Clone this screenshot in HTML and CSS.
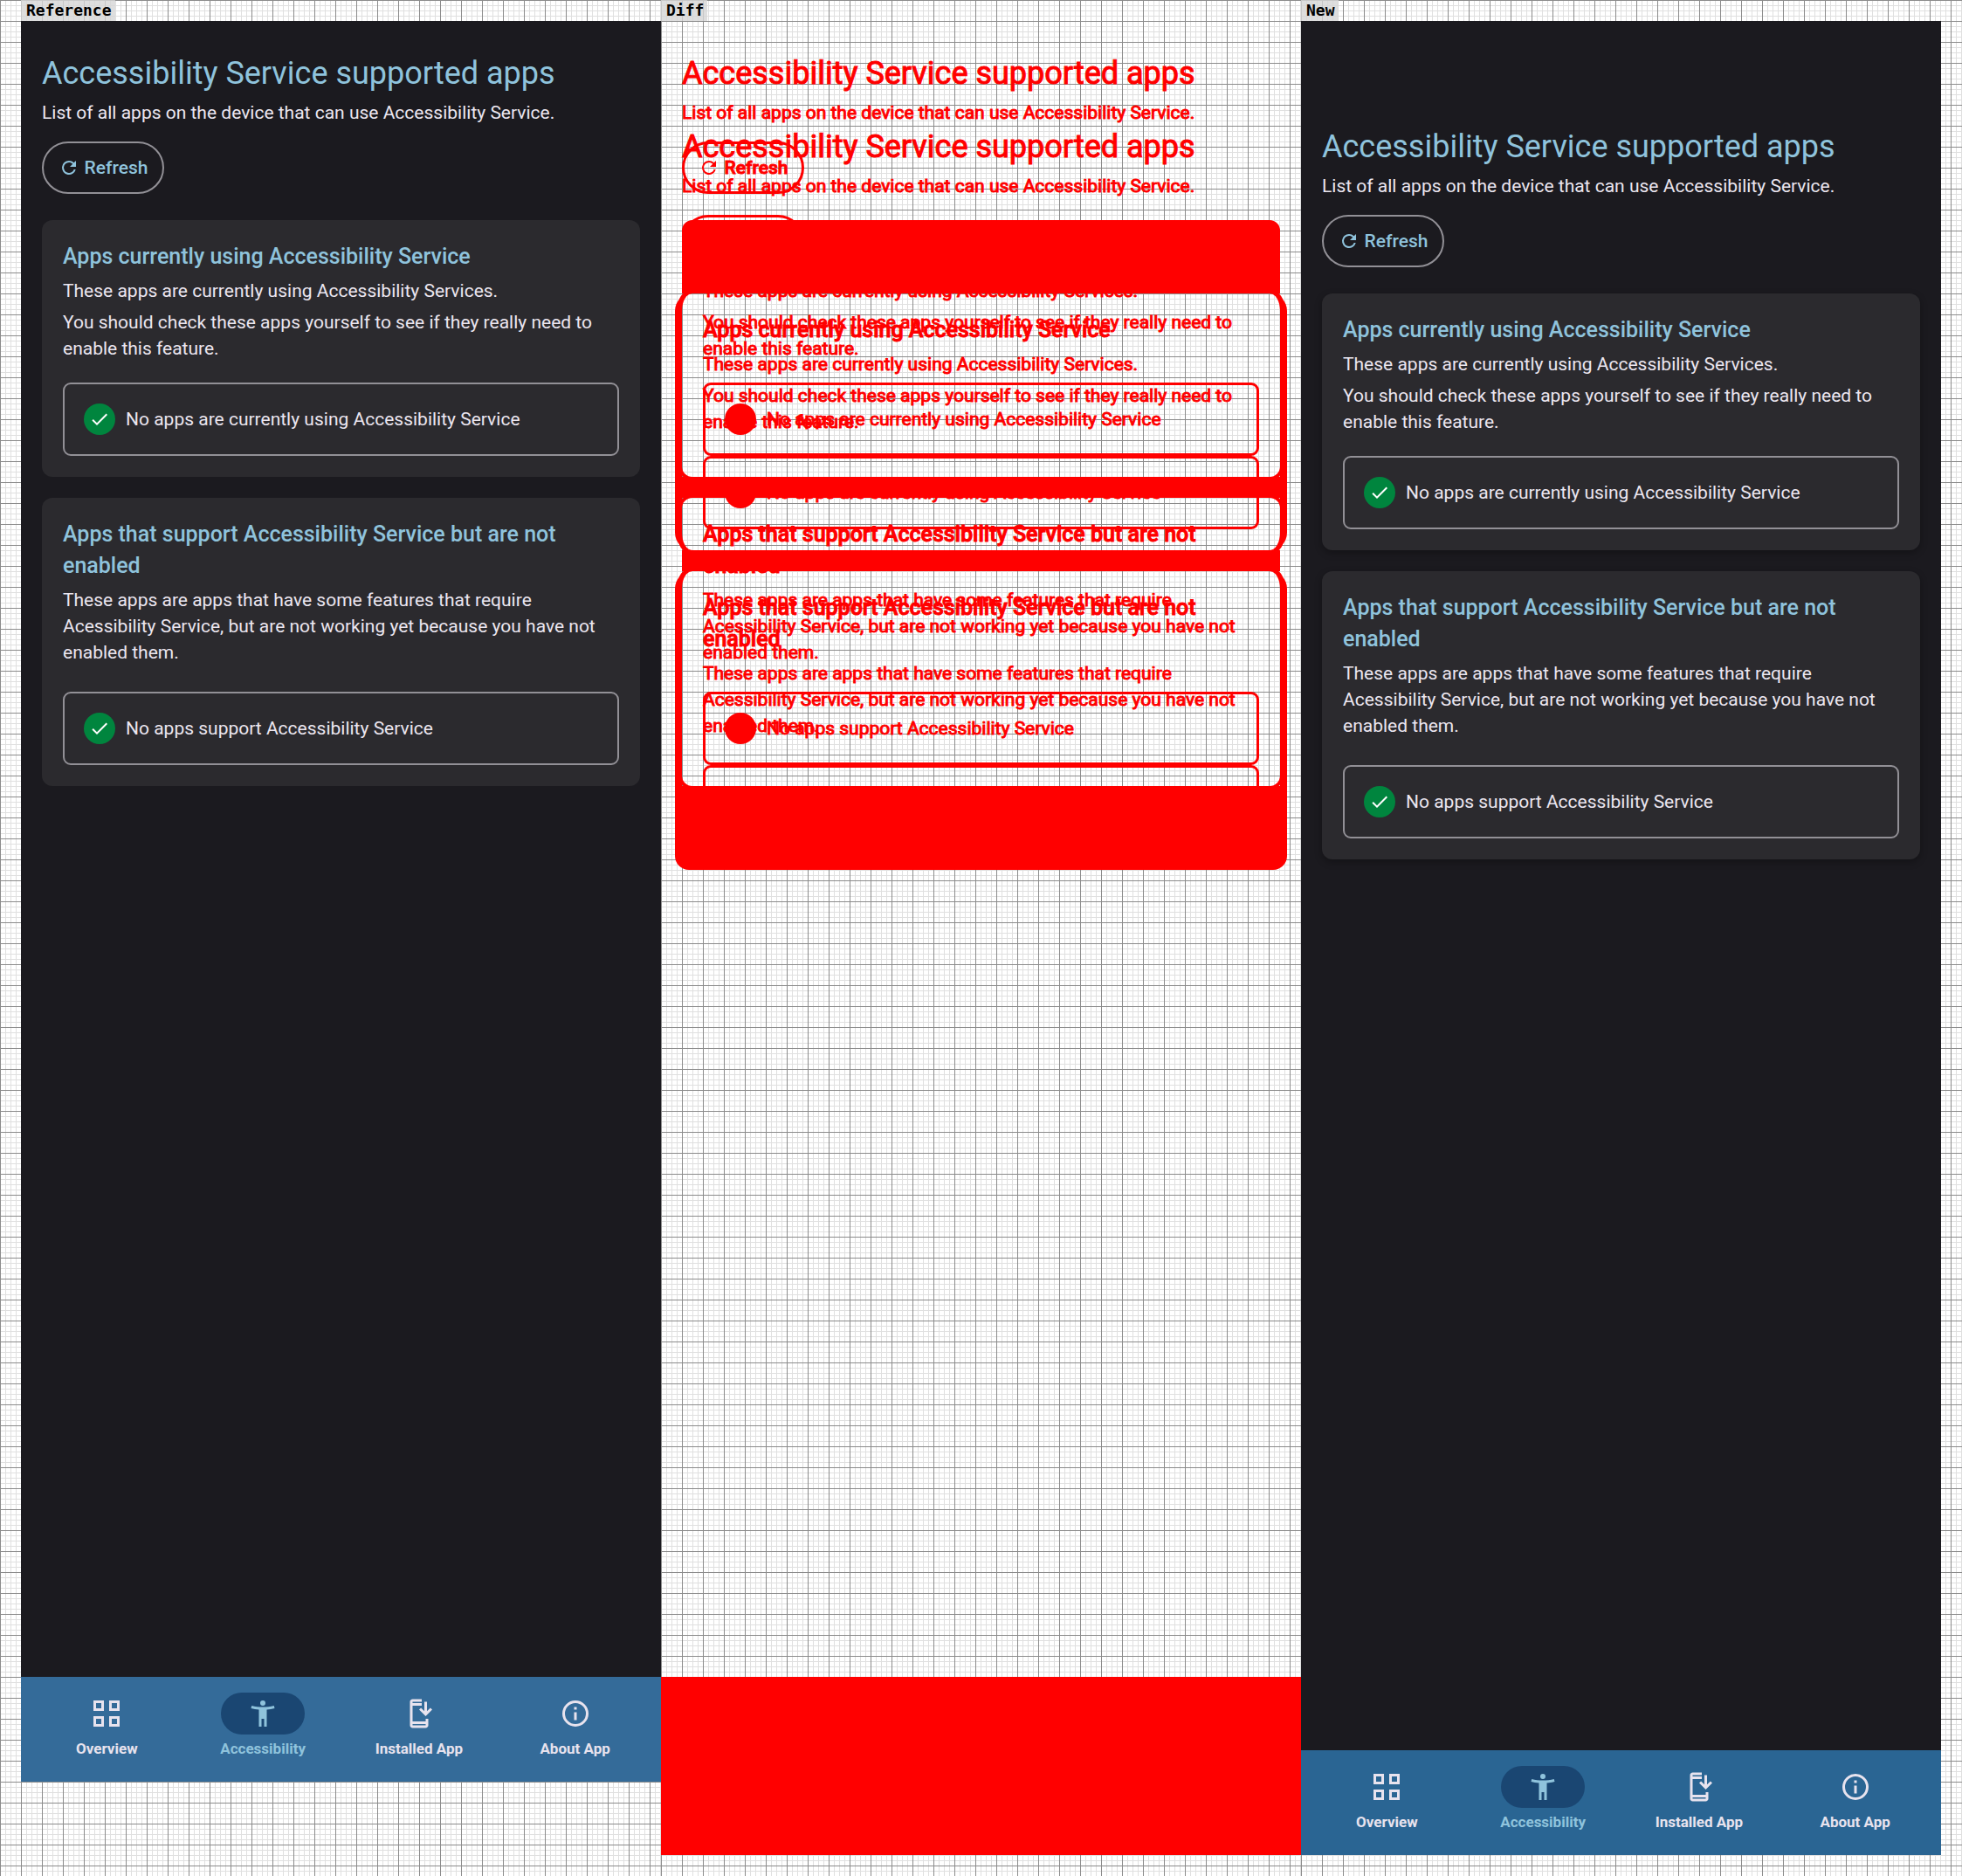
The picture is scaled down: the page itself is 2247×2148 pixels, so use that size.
FILE: index.html
```
<!DOCTYPE html>
<html lang="en">
<head>
<meta charset="utf-8">
<title>Screenshot comparison</title>
<link rel="stylesheet" href="styles.css">
</head>
<body>
<svg class="sprite" aria-hidden="true">
  <symbol id="refresh" viewBox="0 0 24 24"><path d="M17.65 6.35A7.96 7.96 0 0 0 12 4a8 8 0 1 0 7.73 10h-2.08A6 6 0 1 1 12 6c1.66 0 3.14.69 4.22 1.78L13 11h7V4z"/></symbol>
  <symbol id="check" viewBox="0 0 24 24"><path d="M9 16.17 4.83 12l-1.42 1.41L9 19 21 7l-1.41-1.41z"/></symbol>
  <symbol id="grid" viewBox="0 0 24 24"><path fill-rule="evenodd" d="M2 2h8v8H2zM4 4v4h4V4zM14 2h8v8h-8zM16 4v4h4V4zM2 14h8v8H2zM4 16v4h4v-4zM14 14h8v8h-8zM16 16v4h4v-4z"/></symbol>
  <symbol id="person" viewBox="0 0 24 24"><path d="M20.5 6c-2.61.7-5.67 1-8.5 1s-5.89-.3-8.5-1L3 8c1.86.5 4 .83 6 1v13h2v-6h2v6h2V9c2-.17 4.140-.5 6-1zM12 6a2 2 0 1 0 0-4 2 2 0 0 0 0 4z"/></symbol>
  <symbol id="install" viewBox="0 0 24 24"><path d="m17 18H7V6h7V1H7c-1.100 0-2 .9-2 2v18c0 1.100.9 2 2 2h10c1.100 0 2-.9 2-2v-5h-2zm0 3H7v-1h10zM7 3h7v1H7zm15 6-1.410-1.410L18 10.170V3h-2v7.170l-2.590-2.580L12 9l5 5z"/></symbol>
  <symbol id="info" viewBox="0 0 24 24"><path d="M11 7h2v2h-2zm0 4h2v6h-2zm1-9a10 10 0 1 0 0 20 10 10 0 0 0 0-20zm0 18a8 8 0 1 1 0-16 8 8 0 0 1 0 16z"/></symbol>
</svg>
<main class="board">
  <section class="pane">
    <h2 class="tag">Reference</h2>
    <div class="screen">
      <header class="intro">
        <h1 class="title">Accessibility Service supported apps</h1>
        <p class="text">List of all apps on the device that can use Accessibility Service.</p>
        <button class="refresh" type="button"><svg class="refresh-icon"><use href="#refresh"/></svg>Refresh</button>
      </header>
      <article class="card">
        <h3 class="card-title">Apps currently using Accessibility Service</h3>
        <p class="text">These apps are currently using Accessibility Services.</p>
        <p class="text">You should check these apps yourself to see if they really need to enable this feature.</p>
        <div class="status"><span class="badge"><svg><use href="#check"/></svg></span>No apps are currently using Accessibility Service</div>
      </article>
      <article class="card roomy">
        <h3 class="card-title">Apps that support Accessibility Service but are not enabled</h3>
        <p class="text">These apps are apps that have some features that require Acessibility Service, but are not working yet because you have not enabled them.</p>
        <div class="status"><span class="badge"><svg><use href="#check"/></svg></span>No apps support Accessibility Service</div>
      </article>
      <nav class="nav">
        <a href="#" class="nav-item"><span class="pill"><svg><use href="#grid"/></svg></span>Overview</a>
        <a href="#" class="nav-item active"><span class="pill"><svg><use href="#person"/></svg></span>Accessibility</a>
        <a href="#" class="nav-item"><span class="pill"><svg><use href="#install"/></svg></span>Installed App</a>
        <a href="#" class="nav-item"><span class="pill"><svg><use href="#info"/></svg></span>About App</a>
      </nav>
    </div>
  </section>

  <section class="pane diff">
    <h2 class="tag">Diff</h2>
    <div class="layers">
      <div class="screen layer">
        <header class="intro">
          <p class="title">Accessibility Service supported apps</p>
          <p class="text">List of all apps on the device that can use Accessibility Service.</p>
          <button class="refresh" type="button"><svg class="refresh-icon"><use href="#refresh"/></svg>Refresh</button>
        </header>
        <div class="card filled">
          <p class="text">These apps are currently using Accessibility Services.</p>
          <p class="text">You should check these apps yourself to see if they really need to enable this feature.</p>
          <div class="status"><span class="badge"></span>No apps are currently using Accessibility Service</div>
        </div>
        <div class="card roomy">
          <p class="card-title">Apps that support Accessibility Service but are not enabled</p>
          <p class="text">These apps are apps that have some features that require Acessibility Service, but are not working yet because you have not enabled them.</p>
          <div class="status"><span class="badge"></span>No apps support Accessibility Service</div>
        </div>
      </div>
      <div class="screen layer shifted">
        <header class="intro">
          <p class="title">Accessibility Service supported apps</p>
          <p class="text">List of all apps on the device that can use Accessibility Service.</p>
          <div class="refresh"></div>
        </header>
        <div class="card">
          <p class="card-title">Apps currently using Accessibility Service</p>
          <p class="text">These apps are currently using Accessibility Services.</p>
          <p class="text">You should check these apps yourself to see if they really need to enable this feature.</p>
          <div class="status"><span class="badge"></span>No apps are currently using Accessibility Service</div>
        </div>
        <div class="card roomy">
          <p class="card-title">Apps that support Accessibility Service but are not enabled</p>
          <p class="text">These apps are apps that have some features that require Acessibility Service, but are not working yet because you have not enabled them.</p>
          <div class="status"></div>
        </div>
      </div>
      <div class="changes">
        <div class="band top"></div>
        <div class="overlap first"></div>
        <div class="band gap"></div>
        <div class="overlap second"></div>
        <div class="band narrow"></div>
        <div class="overlap third"></div>
        <div class="band end"></div>
        <div class="band foot"></div>
      </div>
    </div>
  </section>

  <section class="pane new">
    <h2 class="tag">New</h2>
    <div class="screen shifted">
      <header class="intro">
        <h1 class="title">Accessibility Service supported apps</h1>
        <p class="text">List of all apps on the device that can use Accessibility Service.</p>
        <button class="refresh" type="button"><svg class="refresh-icon"><use href="#refresh"/></svg>Refresh</button>
      </header>
      <article class="card">
        <h3 class="card-title">Apps currently using Accessibility Service</h3>
        <p class="text">These apps are currently using Accessibility Services.</p>
        <p class="text">You should check these apps yourself to see if they really need to enable this feature.</p>
        <div class="status"><span class="badge"><svg><use href="#check"/></svg></span>No apps are currently using Accessibility Service</div>
      </article>
      <article class="card roomy">
        <h3 class="card-title">Apps that support Accessibility Service but are not enabled</h3>
        <p class="text">These apps are apps that have some features that require Acessibility Service, but are not working yet because you have not enabled them.</p>
        <div class="status"><span class="badge"><svg><use href="#check"/></svg></span>No apps support Accessibility Service</div>
      </article>
      <nav class="nav">
        <a href="#" class="nav-item"><span class="pill"><svg><use href="#grid"/></svg></span>Overview</a>
        <a href="#" class="nav-item active"><span class="pill"><svg><use href="#person"/></svg></span>Accessibility</a>
        <a href="#" class="nav-item"><span class="pill"><svg><use href="#install"/></svg></span>Installed App</a>
        <a href="#" class="nav-item"><span class="pill"><svg><use href="#info"/></svg></span>About App</a>
      </nav>
    </div>
  </section>
</main>
</body>
</html>
```
FILE: styles.css
```
* { box-sizing: border-box; }

:root {
  --surface: #1b1a1f;
  --card: #2b2a2e;
  --text: #ebe6f0;
  --accent: #8fc3dc;
  --outline: #929096;
  --red: #ff0000;
  --graph:
    linear-gradient(#8c8c8c 1px, transparent 1px) 0 0 / 24px 24px,
    linear-gradient(90deg, #8c8c8c 1px, transparent 1px) 0 0 / 24px 24px,
    linear-gradient(#e0e0e0 1px, transparent 1px) 0 0 / 6px 6px,
    linear-gradient(90deg, #e0e0e0 1px, transparent 1px) 0 0 / 6px 6px,
    #fff;
}

body {
  margin: 0;
  min-height: 100vh;
  display: flex;
  background: var(--graph);
  font-family: Roboto, "Liberation Sans", sans-serif;
}

h1, h2, h3, p { margin: 0; }
svg { display: block; fill: currentColor; }
.sprite { position: absolute; width: 0; height: 0; }

/* The last column also carries the right-hand margin of the board */
.board {
  flex: 1;
  display: grid;
  grid-template-columns: 1fr 1fr calc((100% - 24px) / 3 + 24px);
  padding-left: 24px;
}

.pane { display: flex; flex-direction: column; padding-bottom: 24px; }
.pane.diff, .pane.new { background: var(--graph); }
.pane.new { padding-right: 24px; }

.tag {
  align-self: flex-start;
  height: 24px;
  padding: 0 4px 0 6px;
  background: rgba(214, 214, 214, .8);
  color: #000;
  font: bold 18px/24px "DejaVu Sans Mono", monospace;
}

.screen {
  display: flex;
  flex-direction: column;
  min-height: calc(100vh - 132px);
  padding-top: 36px;
  background: var(--surface);
  color: var(--text);
}
.screen.shifted { flex: 1; padding-top: 120px; }

.intro {
  display: flex;
  flex-direction: column;
  align-items: flex-start;
  gap: 6px;
  margin: 0 24px 30px;
}
.title { color: var(--accent); font-size: 36px; font-weight: 400; line-height: 48px; }
.text, .status { font-size: 21px; line-height: 30px; }

.refresh {
  display: flex;
  align-items: center;
  justify-content: center;
  gap: 6px;
  width: 140px;
  height: 60px;
  margin-top: 12px;
  padding: 0;
  border: 2px solid var(--outline);
  border-radius: 30px;
  background: transparent;
  color: var(--accent);
  font: 500 21px/30px Roboto, sans-serif;
}
.refresh-icon { width: 24px; height: 24px; }

.card {
  display: flex;
  flex-direction: column;
  gap: 6px;
  margin: 0 24px 24px;
  padding: 24px;
  border-radius: 12px;
  background: var(--card);
}
.new .card { box-shadow: 0 3px 8px rgba(0, 0, 0, .3); }
.card-title { color: var(--accent); font-size: 25px; font-weight: 500; line-height: 36px; }

.status {
  display: flex;
  align-items: center;
  gap: 12px;
  height: 84px;
  margin-top: 18px;
  padding: 0 22px;
  border: 2px solid var(--outline);
  border-radius: 9px;
}
.roomy .status { margin-top: 24px; }
.badge {
  display: grid;
  place-items: center;
  width: 36px;
  height: 36px;
  border-radius: 50%;
  background: #00853e;
  color: #fff;
}
.badge svg { width: 24px; height: 24px; }

.nav {
  display: flex;
  height: 120px;
  margin-top: auto;
  padding: 18px 9px;
  background: #346b99;
}
.new .nav { background: #2a6593; }
.nav-item {
  flex: 1;
  display: flex;
  flex-direction: column;
  align-items: center;
  gap: 4px;
  color: #e8e3ee;
  font-size: 17px;
  font-weight: 700;
  line-height: 24px;
  text-decoration: none;
}
.pill { display: grid; place-items: center; width: 96px; height: 48px; border-radius: 24px; }
.pill svg { width: 36px; height: 36px; }
.nav-item.active { color: var(--accent); }
.active .pill { background: #1a4672; }

/* Difference view: both screens stacked in one cell, everything that changed in red */
.layers { flex: 1; display: grid; }
.layers > * { grid-area: 1 / 1; }
.diff .screen {
  --accent: var(--red);
  --outline: var(--red);
  --text: var(--red);
  background: none;
  -webkit-text-stroke: 1px var(--red);
}
.diff .card { background: none; }
.diff .refresh, .diff .status { border-width: 3px; }
.diff .badge { background: var(--red); }
.diff .filled { padding-top: 66px; }
.changes { display: flex; flex-direction: column; padding-top: 228px; }
.band { height: 24px; margin: 0 16px; background: var(--red); }
.band.narrow { margin: 0 24px; }
.band.top { height: 84px; margin: 0 24px; border-radius: 12px 12px 0 0; }
.band.end { height: 96px; border-radius: 0 0 16px 16px; }
.band.foot { height: 204px; margin: auto 0 0; }
.overlap { position: relative; margin: 0 16px; border: solid var(--red); border-width: 0 8px; }
.overlap.first { height: 210px; border-radius: 20px 20px 0 0; }
.overlap.second { height: 60px; border-radius: 0 0 20px 20px; }
.overlap.third { height: 246px; border-radius: 20px 20px 0 0; }
.overlap::before {
  content: "";
  position: absolute;
  inset: 0;
  border-radius: 12px;
  box-shadow: 0 0 0 4px var(--red);
}
```
